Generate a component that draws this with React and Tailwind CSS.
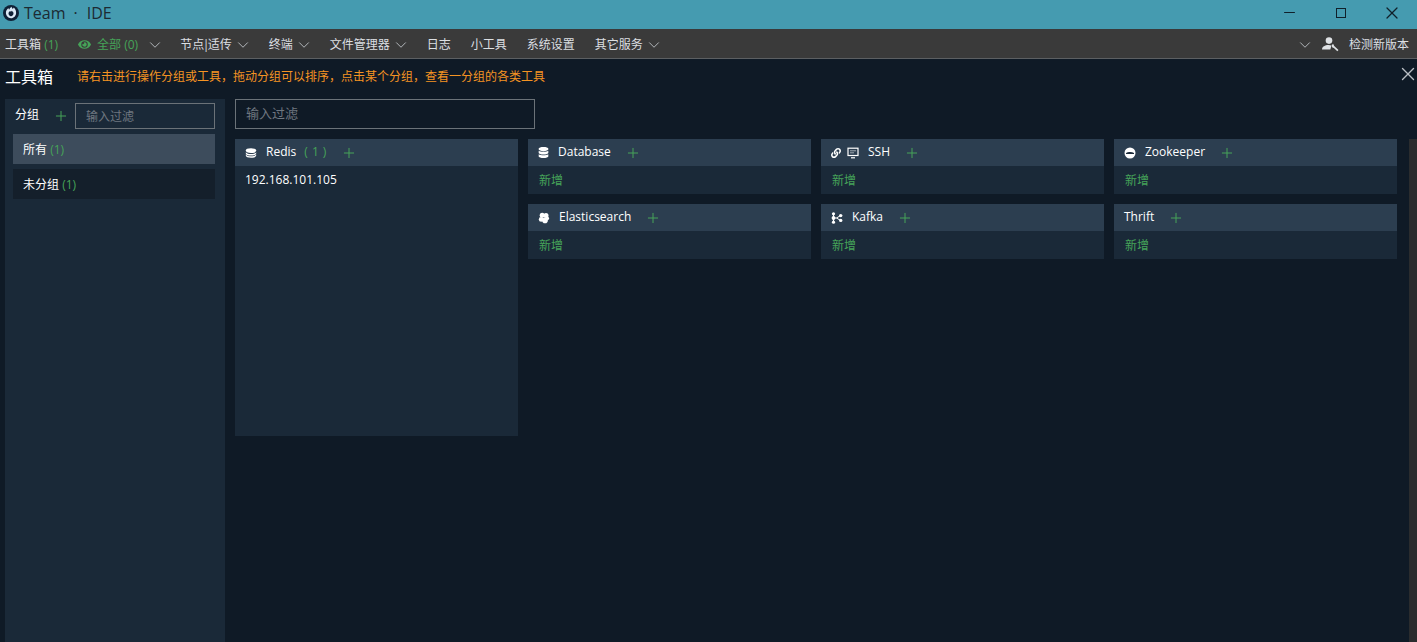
import {ChevronDown, Minus, Plus, X} from "lucide-react";
import {FaDatabase, FaEye, FaLink} from "react-icons/fa";

const font = {fontFamily: '"Open Sans", "Noto Sans CJK SC", sans-serif'};

function Chevron({className = "-mx-[3px]"}) {
  return <ChevronDown strokeWidth={1.3} className={"size-[18px] text-[#b4b8bc] " + className}/>;
}

function MenuItem({label, chevron}) {
  return (
    <div className="flex items-center gap-[5px] text-xs text-[#dcdfe2]">
      <span>{label}</span>
      {chevron && <Chevron/>}
    </div>
  );
}

function RedisIcon() {
  return (
    <svg viewBox="0 0 12 12" className="size-3 text-white" fill="currentColor">
      <ellipse cx="6" cy="3.6" rx="5.2" ry="2.4"/>
      <path d="M.8 5.2C1.8 6.6 3.8 7 6 7s4.200-.4 5.200-1.800V6.400C11.200 7.800 8.800 8.600 6 8.600S.8 7.800.8 6.400z"/>
      <path d="M.8 7.600C1.800 9 3.800 9.300 6 9.300s4.200-.3 5.200-1.700v1C11.200 10 8.800 10.800 6 10.800S.8 10 .8 8.600z"/>
    </svg>
  );
}

function ElasticIcon() {
  return (
    <svg viewBox="0 0 12 12" className="size-3 text-white" fill="currentColor">
      <circle cx="4.200" cy="3.200" r="2.500"/>
      <circle cx="8" cy="3.600" r="2.500"/>
      <circle cx="3.200" cy="7.400" r="2.400"/>
      <circle cx="7" cy="8.400" r="2.800"/>
      <circle cx="9.300" cy="6.400" r="1.800"/>
    </svg>
  );
}

function KafkaIcon() {
  return (
    <svg viewBox="0 0 12 12" className="size-3 text-white" fill="currentColor">
      <path d="M2.500 2v8M2.500 6h3l4-2.400M5.500 6l4 2.400" stroke="currentColor" strokeWidth="1" fill="none"/>
      <circle cx="2.500" cy="1.800" r="1.600"/>
      <circle cx="2.500" cy="6" r="1.900"/>
      <circle cx="2.500" cy="10.200" r="1.600"/>
      <circle cx="9.700" cy="3.600" r="1.700"/>
      <circle cx="9.700" cy="8.400" r="1.700"/>
    </svg>
  );
}

function SshIcon() {
  return (
    <svg viewBox="0 0 12 12" className="size-3 text-white" fill="none" stroke="currentColor">
      <rect x="1" y="1.200" width="10" height="7.300" strokeWidth="1.200"/>
      <path d="M3 3.800h6M3 5.800h4" strokeWidth=".8" opacity=".7"/>
      <path d="M4 10.800h4" strokeWidth="1.200"/>
    </svg>
  );
}

function ZookeeperIcon() {
  return (
    <svg viewBox="0 0 12 12" className="size-3 text-white">
      <circle cx="6" cy="6" r="5.500" fill="currentColor"/>
      <path d="M2 6.200C4 4.800 8 4.800 10 6L10 6.900L2 6.900Z" fill="#1a2938"/>
    </svg>
  );
}

function UserWrench() {
  return (
    <svg viewBox="0 0 17 15" className="h-[15px] w-[17px] text-[#dfe2e5]" fill="currentColor">
      <circle cx="7" cy="3.600" r="3.300"/>
      <path d="M0 12.600c0-3 3-4.600 6.500-4.600 1.100 0 2.100.2 3 .5L8.300 12.600z"/>
      <path d="M10 7.400l1.500-.2.500 1.500 1 1 3.500 3.400-1.200 1.200-3.400-3.400-1.500-.3-.6-1.700z"/>
    </svg>
  );
}

function LogoMark() {
  return (
    <svg viewBox="0 0 16 16" className="size-4">
      <circle cx="8" cy="8" r="8" fill="#0e2036"/>
      <path d="M8.600 1.800c.3 1.800 1 2.300 1.800 1.500.2-.2.3-.5.3-.7 1.500 1.200 2.400 3 2.400 5.100 0 3.100-2.300 5.500-5.100 5.500S2.900 10.800 2.900 7.800c0-2.300 1.300-3.700 2.500-4.900.2 1 .5 1.500 1 1.700.2-1 .9-2 2.200-2.800z" fill="#dbe9f6"/>
      <path d="M8.200 5.600c.2 1 1 1 1.300.6.700.7 1 1.500 1 2.400 0 1.500-1.100 2.600-2.500 2.600s-2.500-1.100-2.500-2.600c0-1.200.9-1.900 1.500-2.500.1.400.3.600.5.700.1-.3.300-.6.700-.8z" fill="#0e2036"/>
    </svg>
  );
}

function ToolCard({icon, name, count, className = "", children}) {
  return (
    <div className={"bg-[#1a2938] " + className}>
      <div className="flex h-[27px] items-center bg-[#2c3e50] px-2.5 text-xs text-white">
        {icon && <span className="mr-[9px] flex items-center gap-1.5">{icon}</span>}
        <span className="pb-0.5">{name}</span>
        {count && <span className="ml-2 pb-0.5 tracking-[0.5px] text-[#46a358]">( 1 )</span>}
        <Plus strokeWidth={1.5} className="ml-3.5 size-4 text-[#46a358]"/>
      </div>
      {children || <div className="pt-1.5 pr-2.5 pb-[5px] pl-[11px] text-xs leading-[17px] text-[#46a358]">新增</div>}
    </div>
  );
}

export default function App() {
  return (
    <div className="flex h-[642px] w-[1417px] flex-col overflow-hidden bg-[#0f1a26]" style={font}>
      <div className="flex h-[29px] shrink-0 items-center justify-between bg-[#459bb0] pb-1 pl-[3px]">
        <div className="flex items-center gap-[5px] text-base text-[#1c2a33]">
          <LogoMark/>
          <span>Team</span>
          <span className="mr-1 ml-[3px]">·</span>
          <span>IDE</span>
        </div>
        <div className="flex items-center text-[#10202a]">
          <span className="flex w-[52px] justify-center"><Minus strokeWidth={1.5} className="size-[17px]"/></span>
          <span className="flex w-[52px] justify-center"><span className="size-2.5 border border-[#10202a]"/></span>
          <span className="flex w-[50px] justify-center"><X strokeWidth={1.5} className="size-5"/></span>
        </div>
      </div>

      <div className="flex h-[30px] shrink-0 items-center justify-between border-b border-[#5c5f62] bg-[#3a3a3a] pt-0.5 pr-2 pl-[5px]">
        <div className="flex items-center gap-5">
          <div className="text-xs text-[#dcdfe2]">工具箱 <span className="text-[#46a358]">(1)</span></div>
          <div className="flex items-center text-xs text-[#46a358]">
            <FaEye className="mr-1.5 size-[13px]"/>
            <span>全部 (0)</span>
            <Chevron className="-mr-1 ml-2"/>
          </div>
          <MenuItem label={<>节点<span className="-mx-[1.5px]">|</span>适传</>} chevron/>
          <MenuItem label="终端" chevron/>
          <MenuItem label="文件管理器" chevron/>
          <MenuItem label="日志"/>
          <MenuItem label="小工具"/>
          <MenuItem label="系统设置"/>
          <MenuItem label="其它服务" chevron/>
        </div>
        <div className="flex items-center text-xs text-[#dcdfe2]">
          <Chevron/>
          <span className="mr-2.5 ml-[11px]"><UserWrench/></span>
          <span>检测新版本</span>
        </div>
      </div>

      <div className="relative flex h-[40px] shrink-0 items-center pb-1 pl-[5px]">
        <span className="text-base text-white">工具箱</span>
        <span className="ml-6 text-xs text-[#f59423]">请右击进行操作分组或工具，拖动分组可以排序，点击某个分组，查看一分组的各类工具</span>
        <X strokeWidth={1.5} className="absolute top-1 right-[-2px] size-[22px] text-[#b9bec3]"/>
      </div>

      <div className="flex min-h-0 flex-1 pl-[5px]">
        <div className="w-[220px] shrink-0 bg-[#1a2938] pt-1 pr-2.5 pl-2">
          <div className="flex h-[26px] items-center">
            <span className="ml-[2px] pb-0.5 text-xs text-white">分组</span>
            <Plus strokeWidth={1.5} className="ml-[14px] size-4 text-[#46a358]"/>
            <input placeholder="输入过滤" className="ml-1.5 h-[26px] w-[140px] border border-[#6b7278] bg-transparent px-2.5 text-xs outline-none placeholder:text-[#6f7780]"/>
          </div>
          <div className="mt-[5px] flex h-[30px] items-center bg-[#3d4c5c] px-2.5 pt-0.5 text-xs text-white">
            所有&nbsp;<span className="text-[#46a358]">(1)</span>
          </div>
          <div className="mt-[5px] flex h-[30px] items-center bg-[#141f2b] px-2.5 pt-0.5 text-xs text-white">
            未分组&nbsp;<span className="text-[#46a358]">(1)</span>
          </div>
        </div>

        <div className="relative min-w-0 flex-1 pl-2.5">
          <input placeholder="输入过滤" className="block h-[30px] w-[300px] border border-[#6b7278] bg-transparent px-2.5 pb-0.5 text-[13px] outline-none placeholder:text-[#6f7780]"/>
          <div className="mt-2.5 flex gap-2.5">
            <ToolCard className="h-[297px] w-[283px] shrink-0" icon={<RedisIcon/>} name="Redis" count>
              <div className="px-2.5 pt-1.5 text-xs leading-4 text-white">192.168.101.105</div>
            </ToolCard>
            <div className="grid grid-cols-[283px_283px_283px] content-start gap-2.5">
              <ToolCard icon={<FaDatabase className="size-[11px] text-white"/>} name="Database"/>
              <ToolCard icon={<><FaLink className="size-2.5 text-white"/><SshIcon/></>} name="SSH"/>
              <ToolCard icon={<ZookeeperIcon/>} name="Zookeeper"/>
              <ToolCard icon={<ElasticIcon/>} name="Elasticsearch"/>
              <ToolCard icon={<KafkaIcon/>} name="Kafka"/>
              <ToolCard name="Thrift"/>
            </div>
          </div>
          <div className="absolute top-10 right-0 bottom-0 w-2 bg-[#2a2c2e]"/>
        </div>
      </div>
    </div>
  );
}
